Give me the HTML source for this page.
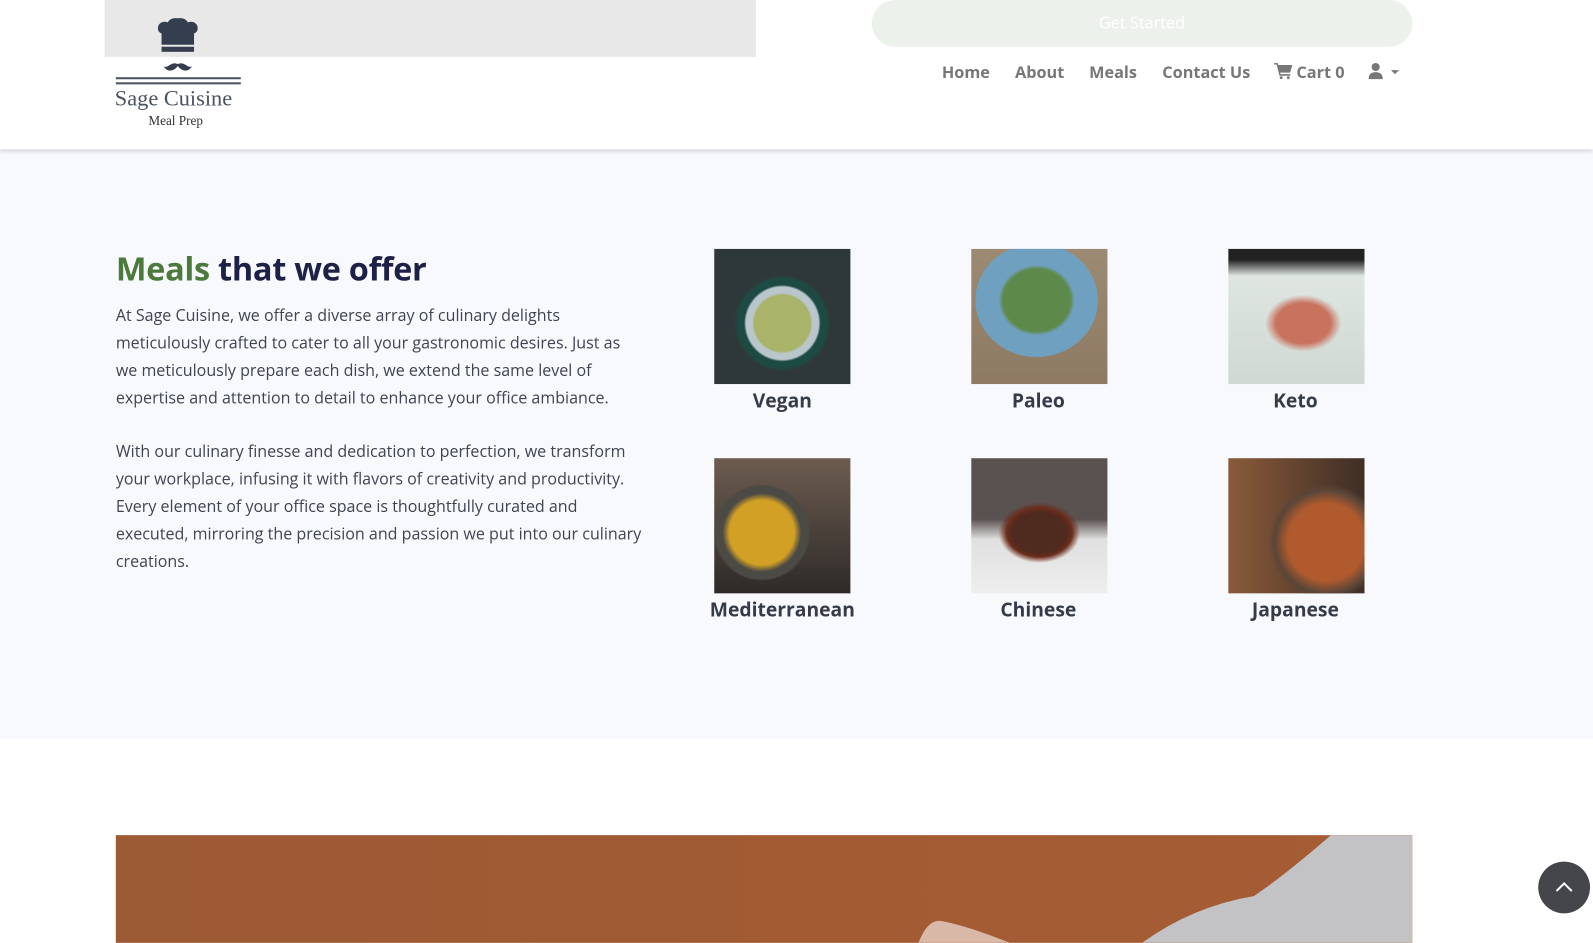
<!DOCTYPE html>
<html><head><meta charset="utf-8"><style>
*{margin:0;padding:0;box-sizing:border-box}
body{width:1593px;height:928px;overflow:hidden;background:#fff;font-family:"Open Sans","DejaVu Sans","Liberation Sans",sans-serif;position:relative}
#w{position:absolute;left:0;top:0;width:1568px;height:914px;transform:scale(1.016);transform-origin:0 0}
.hdr{position:absolute;left:0;top:0;width:1568px;height:147px;background:#fff;box-shadow:0 2px 4px rgba(0,0,0,.15);z-index:2}
.grey{position:absolute;left:103px;top:0;width:641px;height:56px;background:#e8e8e8}
.btn{position:absolute;left:858px;top:0;width:532px;height:46px;background:#edf1ec;border-radius:23px;color:#fff;text-align:center;line-height:44px;font-size:16px}
.nav{position:absolute;top:60px;font-size:16px;font-weight:bold;color:#777}
.sec{position:absolute;left:0;top:147px;width:1568px;height:580px;background:#f8f9fd}
h2{position:absolute;left:114px;top:243px;font-size:32px;font-weight:bold;color:#1d2147;letter-spacing:-0.3px}
h2 span{color:#4c7a3c}
.p{position:absolute;left:114px;font-size:15.8px;line-height:27px;color:#3f4453;white-space:nowrap}
.img{position:absolute;width:134px;height:133px}
.lb{position:absolute;width:200px;text-align:center;font-size:19px;font-weight:bold;color:#353b4b}
.banner{position:absolute;left:114px;top:822px;width:1276px;height:106px;overflow:hidden;background:linear-gradient(90deg,#9c5a35 0%,#a25b33 55%,#a65d34 100%)}
.up{position:absolute;left:1514px;top:848px;width:51px;height:51px;border-radius:50%;background:#45454c}
</style></head><body><div id="w">
<div class="hdr">
<div class="grey"></div>
<svg style="position:absolute;left:154px;top:17px" width="42" height="58" viewBox="0 0 42 58">
<path d="M5 16 Q0 14 2 8 Q5 3 11 5 Q14 0 21 1 Q28 0 31 5 Q37 3 40 8 Q42 14 37 16 L37 27 L5 27 Z" fill="#353e4f"/>
<rect x="5" y="29" width="32" height="5" fill="#353e4f"/>
<path d="M7 48 Q10 54 16 52 Q19 51 21 48 Q23 51 26 52 Q32 54 35 48 Q33 50 29 47 Q25 44 21 46 Q17 44 13 47 Q9 50 7 48Z" fill="#353e4f"/>
</svg>
<div style="position:absolute;left:114px;top:76px;width:123px;height:2px;background:#4a5262"></div>
<div style="position:absolute;left:114px;top:81px;width:123px;height:2px;background:#4a5262"></div>
<div style="position:absolute;left:113px;top:84px;font-family:'Liberation Serif',serif;font-size:22px;color:#4a5262">Sage Cuisine</div>
<div style="position:absolute;left:146px;top:111px;font-family:'Liberation Serif',serif;font-size:13px;color:#333">Meal Prep</div>
<div class="btn">Get Started</div>
<div class="nav" style="left:927px">Home</div>
<div class="nav" style="left:999px">About</div>
<div class="nav" style="left:1072px">Meals</div>
<div class="nav" style="left:1144px">Contact Us</div>
<svg style="position:absolute;left:1254px;top:62px" width="18" height="16" viewBox="0 0 18 16"><path d="M0 0h3.5l.7 2H18l-2.2 7.5H6l.5 1.5H16v1.5H5.3L2.5 1.5H0Z" fill="#777"/><circle cx="7" cy="14.5" r="1.4" fill="#777"/><circle cx="14" cy="14.5" r="1.4" fill="#777"/></svg>
<div class="nav" style="left:1276px">Cart 0</div>
<svg style="position:absolute;left:1347px;top:62px" width="32" height="16" viewBox="0 0 32 16"><circle cx="7" cy="4" r="4" fill="#777"/><path d="M0 16 Q0 9 7 9 Q14 9 14 16Z" fill="#777"/><path d="M22 7h8l-4 4z" fill="#777"/></svg>
</div>
<div class="sec"></div>
<h2><span>Meals</span> that we offer</h2>
<div class="p" style="top:297px">At Sage Cuisine, we offer a diverse array of culinary delights<br>meticulously crafted to cater to all your gastronomic desires. Just as<br>we meticulously prepare each dish, we extend the same level of<br>expertise and attention to detail to enhance your office ambiance.</div>
<div class="p" style="top:431px">With our culinary finesse and dedication to perfection, we transform<br>your workplace, infusing it with flavors of creativity and productivity.<br>Every element of your office space is thoughtfully curated and<br>executed, mirroring the precision and passion we put into our culinary<br>creations.</div>
<div class="img" style="left:703px;top:245px;background:radial-gradient(circle at 50% 55%,#a9b46a 0 28%,#b9c6cc 30% 36%,#1e4a44 38% 44%,#2f3838 48%)"></div>
<div class="img" style="left:956px;top:245px;background:radial-gradient(ellipse 45% 42% at 48% 38%,#5d8a4a 0 55%,#6fa0c0 62% 100%,transparent 100%),linear-gradient(#9c8a73,#8e7a63)"></div>
<div class="img" style="left:1209px;top:245px;background:radial-gradient(ellipse 40% 30% at 55% 55%,#c9735f 0 50%,transparent 70%),linear-gradient(#222 0 8%,#dfe6e2 20%,#cfd8d3)"></div>
<div class="img" style="left:703px;top:451px;background:radial-gradient(circle at 35% 55%,#d2a024 0 28%,#4c4a45 34% 40%,transparent 42%),linear-gradient(#6c5c50,#2e2a28)"></div>
<div class="img" style="left:956px;top:451px;background:radial-gradient(ellipse 40% 30% at 50% 55%,#4f2a1e 0 50%,#6a2c1a 60%,transparent 75%),linear-gradient(#5a5250 0 45%,#dfe0df 60%,#eee)"></div>
<div class="img" style="left:1209px;top:451px;background:radial-gradient(circle at 72% 62%,#b05a2e 0 30%,#5a4638 40%,transparent 45%),linear-gradient(90deg,#8a5a3a,#3e2e26)"></div>
<div class="lb" style="left:670px;top:381px">Vegan</div>
<div class="lb" style="left:922px;top:381px">Paleo</div>
<div class="lb" style="left:1175px;top:381px">Keto</div>
<div class="lb" style="left:670px;top:587px">Mediterranean</div>
<div class="lb" style="left:922px;top:587px">Chinese</div>
<div class="lb" style="left:1175px;top:587px">Japanese</div>
<div class="banner"><svg width="1276" height="106" style="position:absolute;left:0;top:0"><path d="M1196 0H1276V106H1010Q1060 70 1120 60Q1150 40 1196 0Z" fill="#c3c2c4"/><path d="M790 106Q800 80 815 85Q840 90 880 106Z" fill="#d9b8a8"/></svg></div>
<div class="up"><svg width="51" height="51" viewBox="0 0 51 51"><path d="M18 29l7.5-7.5L33 29" fill="none" stroke="#fff" stroke-width="2"/></svg></div>
</div></body></html>
